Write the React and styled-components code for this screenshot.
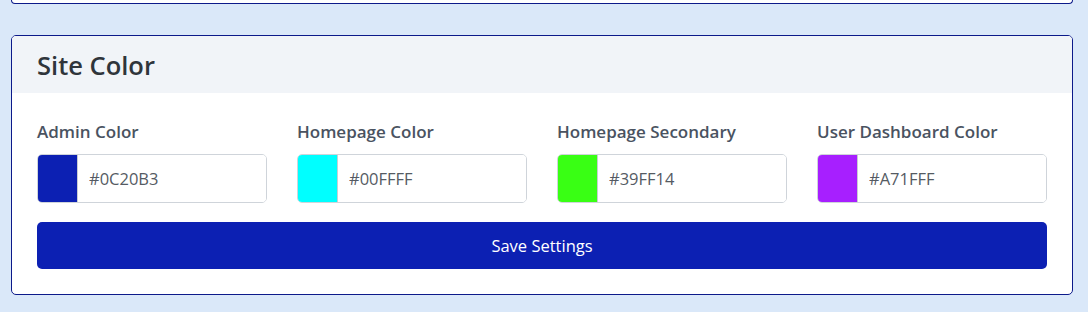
import React, { useState } from 'react';
import styled, { createGlobalStyle } from 'styled-components';

const GlobalStyle = createGlobalStyle`
  body {
    margin: 0;
    background-color: #dae8f9;
    font-family: "Open Sans", "Noto Sans", Arial, sans-serif;
  }
`;

const Page = styled.div`
  display: flex;
  flex-direction: column;
  gap: 31px;
  padding: 0 15px 16px 11px;
`;

const PrevCardEdge = styled.div`
  height: 3px;
  background-color: #ffffff;
  border: 1px solid #0c1a8a;
  border-top: none;
  border-radius: 0 0 5px 5px;
`;

const Card = styled.section`
  background-color: #ffffff;
  border: 1px solid #0c1a8a;
  border-radius: 5px;
  overflow: hidden;
`;

const CardHeader = styled.div`
  display: flex;
  align-items: center;
  height: 57px;
  padding: 0 25px;
  background-color: #f1f4f8;
`;

const Title = styled.h2`
  margin: 0;
  font-size: 25.5px;
  font-weight: 600;
  color: #2f353b;
`;

const CardBody = styled.div`
  display: flex;
  flex-direction: column;
  gap: 19px;
  padding: 27px 25px 25px 25px;
`;

const Grid = styled.div`
  display: grid;
  grid-template-columns: repeat(4, minmax(0, 1fr));
  gap: 30px;
`;

const Field = styled.div`
  display: flex;
  flex-direction: column;
  gap: 10px;
  min-width: 0;
`;

const Label = styled.label`
  font-size: 17px;
  font-weight: 600;
  color: #4a5361;
  line-height: 24px;
  white-space: nowrap;
`;

const InputGroup = styled.div`
  display: flex;
  height: 47px;
  border: 1px solid #cfd4da;
  border-radius: 5px;
  overflow: hidden;
`;

const Swatch = styled.div`
  width: 39px;
  flex-shrink: 0;
  background-color: ${(p) => p.$color};
  border-right: 1px solid #c9cdd2;
`;

const HexInput = styled.input`
  flex: 1;
  width: 100%;
  min-width: 0;
  border: none;
  outline: none;
  padding: 0 11px;
  font-family: inherit;
  font-size: 16.5px;
  color: #555b63;
  background: #ffffff;
`;

const SaveButton = styled.button`
  height: 47px;
  border: none;
  border-radius: 5px;
  background-color: #0c20b3;
  color: #ffffff;
  font-family: inherit;
  font-size: 16.5px;
  cursor: pointer;
`;

const fields = [
  { key: 'admin', label: 'Admin Color', value: '#0C20B3' },
  { key: 'home', label: 'Homepage Color', value: '#00FFFF' },
  { key: 'secondary', label: 'Homepage Secondary', value: '#39FF14' },
  { key: 'user', label: 'User Dashboard Color', value: '#A71FFF' },
];

const App = () => {
  const [colors, setColors] = useState(
    Object.fromEntries(fields.map((f) => [f.key, f.value]))
  );

  const handleChange = (e) => {
    const { name, value } = e.target;
    setColors((prev) => ({ ...prev, [name]: value }));
  };

  return (
    <>
      <GlobalStyle />
      <Page>
        <PrevCardEdge />
        <Card>
          <CardHeader>
            <Title>Site Color</Title>
          </CardHeader>
          <CardBody>
            <Grid>
              {fields.map((f) => (
                <Field key={f.key}>
                  <Label htmlFor={f.key}>{f.label}</Label>
                  <InputGroup>
                    <Swatch $color={colors[f.key]} />
                    <HexInput
                      id={f.key}
                      name={f.key}
                      value={colors[f.key]}
                      onChange={handleChange}
                    />
                  </InputGroup>
                </Field>
              ))}
            </Grid>
            <SaveButton type="button">Save Settings</SaveButton>
          </CardBody>
        </Card>
      </Page>
    </>
  );
};

export default App;
